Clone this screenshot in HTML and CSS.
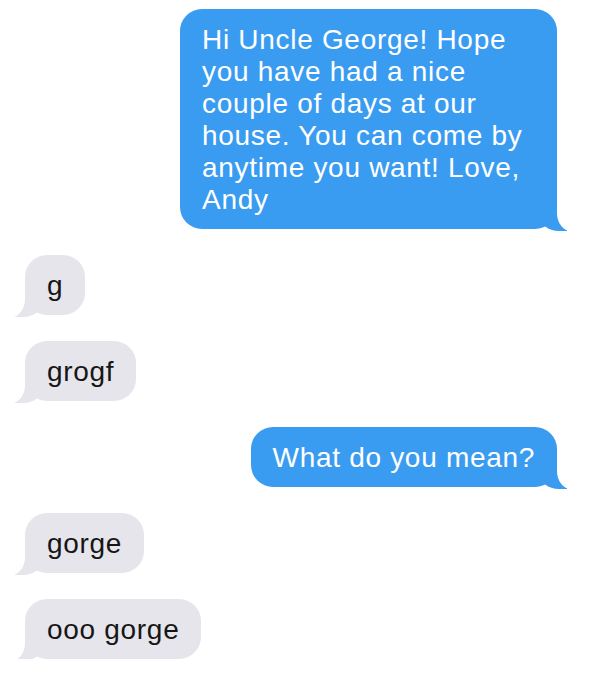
FILE: index.html
```html
<!DOCTYPE html>
<html lang="en">
<head>
  <meta charset="UTF-8" />
  <meta name="viewport" content="width=device-width, initial-scale=1.0"/>
  <title>Messages</title>
  <link rel="stylesheet" href="styles.css">
</head>
<body>
  <div class="chat">
    <div class="bubble sent wide">Hi Uncle George! Hope you have had a nice couple of days at our house. You can come by anytime you want! Love, Andy</div>
    <div class="bubble received">g</div>
    <div class="bubble received">grogf</div>
    <div class="bubble sent">What do you mean?</div>
    <div class="bubble received">gorge</div>
    <div class="bubble received">ooo gorge</div>
  </div>
</body>
</html>
```

FILE: styles.css
```css
* {
  box-sizing: border-box;
  margin: 0;
  padding: 0;
}

body {
  background: #fff;
  font-family: 'Liberation Sans', Arial, sans-serif;
}

.chat {
  display: flex;
  flex-direction: column;
  gap: 26px;
  padding: 9px 43px 0 25px;
}

.bubble {
  position: relative;
  font-size: 28px;
  line-height: 32px;
  letter-spacing: 0.7px;
  padding: 15px 22px 13px;
  border-radius: 22px;
  width: fit-content;
}

.bubble.wide {
  max-width: 377px;
}

/* tails */
.bubble::before,
.bubble::after {
  content: "";
  position: absolute;
  bottom: -2px;
  height: 28px;
}

.sent {
  align-self: flex-end;
  background: #3a9cf0;
  color: #fff;
}

.sent::before {
  right: -10px;
  width: 28px;
  background: #3a9cf0;
  border-bottom-left-radius: 20px 16px;
}

.sent::after {
  right: -14px;
  width: 14px;
  background: #fff;
  border-bottom-left-radius: 14px 18px;
}

.received {
  align-self: flex-start;
  background: #e6e5eb;
  color: #161616;
}

.received::before {
  left: -10px;
  width: 28px;
  background: #e6e5eb;
  border-bottom-right-radius: 20px 16px;
}

.received::after {
  left: -14px;
  width: 14px;
  background: #fff;
  border-bottom-right-radius: 14px 18px;
}
```
